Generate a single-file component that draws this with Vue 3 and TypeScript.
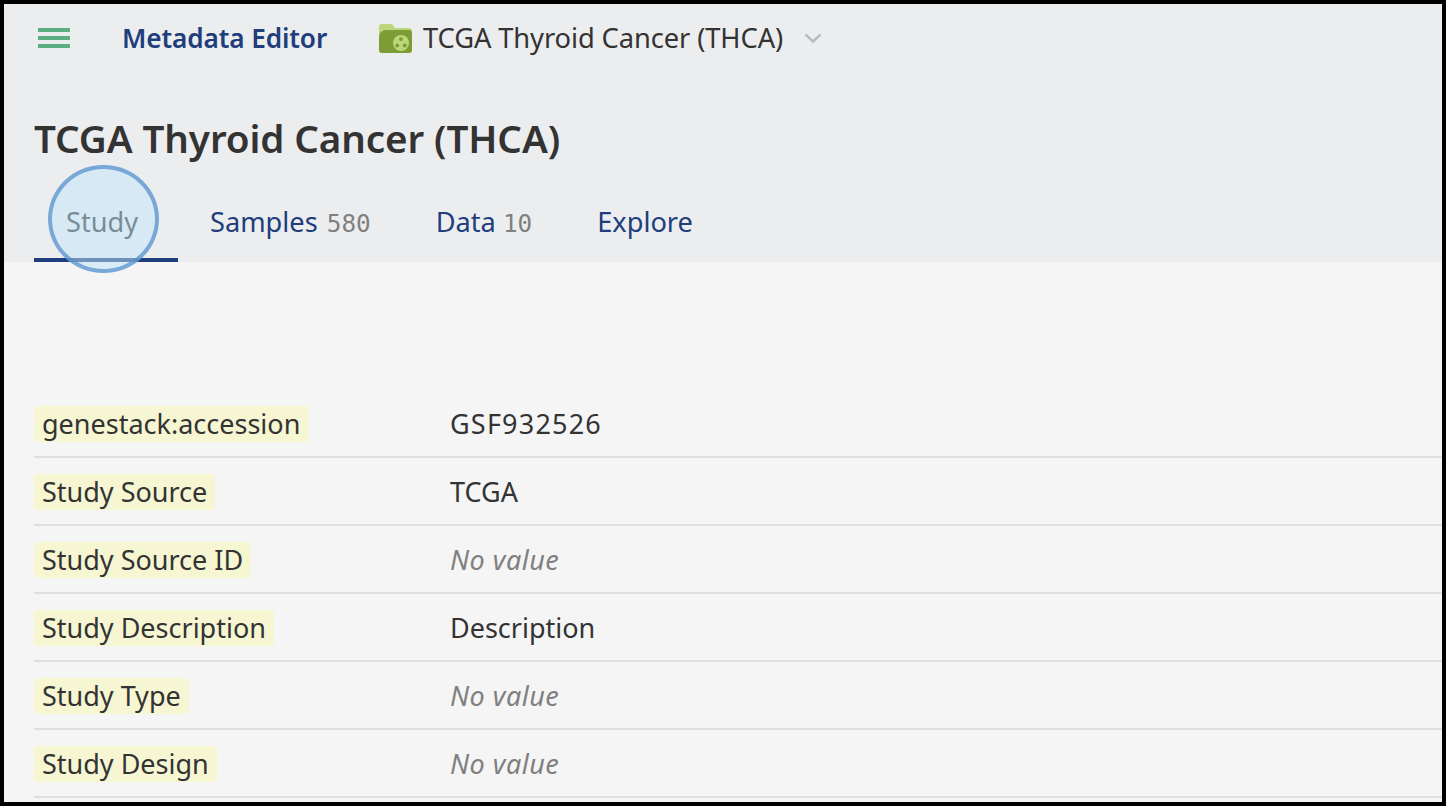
<script setup lang="ts">
interface Row { label: string; value?: string }
const rows: Row[] = [
  { label: 'genestack:accession', value: 'GSF932526' },
  { label: 'Study Source', value: 'TCGA' },
  { label: 'Study Source ID' },
  { label: 'Study Description', value: 'Description' },
  { label: 'Study Type' },
  { label: 'Study Design' },
]
</script>

<template>
  <div class="frame">
    <header class="head">
      <div class="topbar">
        <svg class="menu" width="32" height="21" viewBox="0 0 32 21"><path d="M0 0h32v4H0zM0 8h32v4H0zM0 16h32v4H0z" fill="#5aae80"/></svg>
        <span class="brand">Metadata Editor</span>
        <svg class="folder" width="33" height="31" viewBox="0 0 33 31">
          <path d="M0 4a3 3 0 0 1 3-3h10l3 4h14a3 3 0 0 1 3 3v6H0z" fill="#bdd67c"/>
          <path d="M0 14a7 7 0 0 1 7-7h23a3 3 0 0 1 3 3v17a3 3 0 0 1-3 3H3a3 3 0 0 1-3-3z" fill="#7b9d33"/>
          <circle cx="22" cy="20" r="8" fill="#bdd67c"/>
          <circle cx="22" cy="16.2" r="1.9" fill="#7b9d33"/>
          <circle cx="18.2" cy="22.5" r="1.9" fill="#7b9d33"/>
          <circle cx="25.8" cy="22.5" r="1.9" fill="#7b9d33"/>
        </svg>
        <span class="crumb">TCGA Thyroid Cancer (THCA)</span>
        <svg class="chev" width="18" height="11" viewBox="0 0 18 11"><path d="M1.5 1.5 9 8.5l7.5-7" fill="none" stroke="#b9bbbe" stroke-width="2.4"/></svg>
      </div>
      <h1 class="title">TCGA Thyroid Cancer (THCA)</h1>
      <nav class="tabs">
        <a class="tab active">Study<span class="halo"></span></a>
        <a class="tab">Samples <span class="count">580</span></a>
        <a class="tab">Data <span class="count tight">10</span></a>
        <a class="tab">Explore</a>
      </nav>
    </header>
    <main class="body">
      <div v-for="r in rows" :key="r.label" class="row">
        <div class="key"><span class="pill">{{ r.label }}</span></div>
        <div class="val" :class="{ empty: !r.value, code: r.value?.startsWith('GSF') }">{{ r.value ?? 'No value' }}</div>
      </div>
    </main>
  </div>
</template>

<style>
html, body { margin: 0; padding: 0; background: #000; overflow: hidden; }
</style>

<style scoped>
.frame {
  box-sizing: border-box;
  width: 1446px;
  height: 806px;
  border: 4px solid #000;
  background: #f5f5f5;
  overflow: hidden;
  font-family: "Noto Sans", "Open Sans", sans-serif;
  color: #333;
}
.head { height: 258px; background: #ecedef; box-sizing: border-box; }
.topbar { display: flex; align-items: center; height: 68px; padding-left: 34px; }
.menu { margin-right: 52px; margin-top: 1px; }
.brand { font-size: 26.2px; font-weight: 600; color: #203d7c; width: 257px; letter-spacing: -0.1px; }
.folder { margin-right: 11px; }
.crumb { font-size: 27.3px; color: #333; letter-spacing: -0.1px; margin-top: -1px; }
.chev { margin-left: 21px; }
.title { margin: 0; padding: 40px 0 0 30px; font-size: 38.6px; line-height: 52px; font-weight: 600; color: #333; letter-spacing: -0.1px; }
.tabs { display: flex; padding: 0 0 0 30px; margin-top: 29px; }
.tab { position: relative; box-sizing: border-box; height: 69px; padding: 0 32px; margin-right: 1px; font-size: 27.2px; line-height: 58px; color: #203d7c; white-space: nowrap; }
.tab.active { width: 144px; margin-right: 0; border-bottom: 4px solid #203d7c; color: #333; }
.count { font-family: "DejaVu Sans Mono", monospace; color: #808080; font-size: 24.3px; margin-left: 2px; }
.count.tight { margin-left: 0; }
.halo {
  position: absolute; left: 14px; top: -28px; width: 111px; height: 108px; box-sizing: border-box;
  border-radius: 50%; border: 4px solid rgba(85, 143, 205, .72); background: rgba(192, 229, 249, .5);
}
.body { padding: 128px 0 0 30px; }
.row { display: flex; height: 68px; box-sizing: border-box; border-bottom: 2px solid #dfdfdf; align-items: center; font-size: 27px; }
.key { width: 416px; }
.pill { display: inline-block; background: #f7f6d2; border-radius: 3px; padding: 0 8px; height: 36px; line-height: 36px; }
.val { color: #333; }
.val.code { letter-spacing: 1.2px; }
.val.empty { color: #808080; font-style: italic; letter-spacing: .5px; }
</style>
